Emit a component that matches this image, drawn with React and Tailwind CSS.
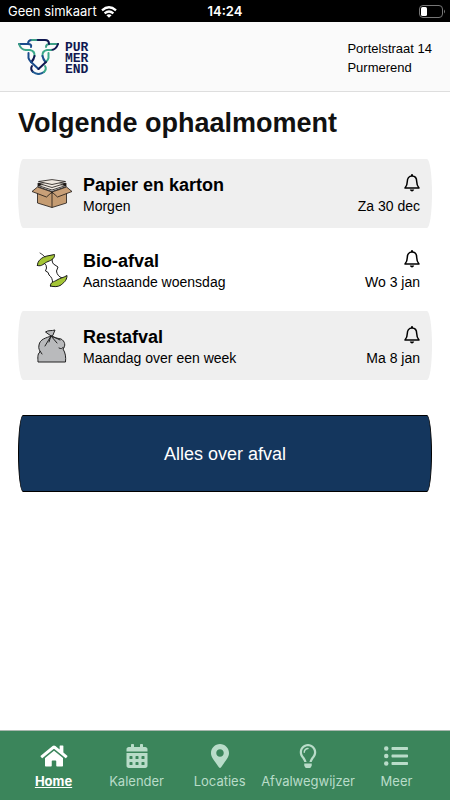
import { FaHome, FaCalendarAlt, FaMapMarkerAlt, FaRegLightbulb, FaListUl } from 'react-icons/fa';

const BoxIcon = () => (
  <svg viewBox="0 0 42 30" className="w-[42px] h-[30px]" stroke="#1c1714" strokeWidth="0.8" strokeLinejoin="round">
    <path d="M6.500 10 L21 14 L35.500 10 V24 L21 28.500 L6.500 24 Z" fill="#c59c72" />
    <path d="M7 6.500 L20 4 L35 6.500 L21 11 Z" fill="#efe8df" />
    <path d="M8 4.500 L20 2.500 L34 4.500 L21 8.500 Z" fill="#efe8df" />
    <path d="M7.500 2.500 L21 0.600 L34.500 2.500 L28 4 L21 5.500 L14 4 Z" fill="#efe8df" />
    <path d="M7 4 L10 5.500 L7 7 Z M35 4 L32 5.500 L35 7 Z" fill="#1c1714" />
    <path d="M6.500 7.500 L21 12.500 L35.500 7.500" fill="none" />
    <path d="M6.500 8 L21 13 L15.500 18 L1 12.500 Z" fill="#c9a078" />
    <path d="M35.500 8 L21 13 L26.500 18 L41 12.500 Z" fill="#c9a078" />
    <path d="M21 13 V28.500" fill="none" />
  </svg>
);

const AppleCoreIcon = () => (
  <svg viewBox="0 0 32 36" className="w-8 h-9" fill="none" stroke="#1a1a1a" strokeWidth="1" strokeLinecap="round" strokeLinejoin="round">
    <path d="M8 11 Q11 13 10.500 16 L9.500 19 Q13 20 13 23 Q17 26 16.500 31" />
    <path d="M16 7 Q16 12 19 13 L22 15 L20.500 19 Q21 24 26 26" />
    <path d="M1.500 13.500 C1 9 6 5 11 4 L18.500 2.500 C19 6 16 8 12 9.500 C8 11 6 15 1.500 13.500 Z" fill="#a4c535" />
    <path d="M14.500 34 C14 30 18 30 21 28 C24 26 27 26 31 23.500 C31 29 27 31 25 33 C22 35 18 35 14.500 34 Z" fill="#a4c535" />
    <path d="M9 5 L7 3 L4 1" strokeWidth="0.800" />
  </svg>
);

const BagIcon = () => (
  <svg viewBox="0 0 30 34" className="w-[30px] h-[34px]" fill="none" stroke="#222" strokeWidth="1" strokeLinecap="round" strokeLinejoin="round">
    <path d="M14 7 C9 9 3 10 2 16 C1 20 3 21 3 23 C0 25 1 30 1 33 H28.500 C29 28 28.500 24 26 20 C29 17 28 12 24 10 C20 9 17 9 14 7 Z" fill="#b9babc" />
    <path d="M14 7 L8.500 3 C11 1 15 2 18 1 L16 6 Z" fill="#b9babc" />
    <path d="M14 7 L8 17 M14 7 L12 13 M14 7 L20 14 M15 7 L23 11" />
    <path d="M3 22 L5 25 M26.500 18 C25 20 24 20 22 19" />
  </svg>
);

const BellIcon = () => (
  <svg viewBox="0 0 16 18" className="w-4 h-[18px]" fill="none" stroke="#000" strokeWidth="1.500" strokeLinejoin="round">
    <path d="M8 2 C4.800 2 3.300 4.500 3.300 7.500 C3.300 11 2.500 12.300 1 14 H15 C13.500 12.300 12.700 11 12.700 7.500 C12.700 4.500 11.200 2 8 2 Z" />
    <path d="M8 0.300 V2" strokeWidth="2" />
    <path d="M5.800 15.600 H10.200 C9.800 18 6.200 18 5.800 15.600 Z" fill="#000" stroke="none" />
  </svg>
);

const WifiIcon = () => (
  <svg viewBox="0 0 16 12" className="w-4 h-3" fill="none" stroke="#fff" strokeWidth="2.300">
    <path d="M1 4.300 Q8 -1.700 15 4.300" />
    <path d="M3.600 7.300 Q8 3.700 12.400 7.300" />
    <path d="M5.400 9.200 Q8 7.200 10.600 9.200 L8 11.800 Z" fill="#fff" stroke="none" />
  </svg>
);

const CowIcon = () => (
  <svg viewBox="0 0 42 36" className="w-[42px] h-9" fill="none" strokeWidth="2" strokeLinecap="round" strokeLinejoin="round">
    {/* ears */}
    <path d="M1 5 H10 Q14 5 13 8" stroke="#194a8b" />
    <path d="M1 5 Q3 11 8 11" stroke="#3d9f86" />
    <path d="M40 5 H32 Q28 5 28 8" stroke="#3d9f86" />
    <path d="M40 5 Q38 11 33 11" stroke="#101850" />
    {/* top of the head */}
    <path d="M10 5 Q10 1 14 1 H20" stroke="#194a8b" />
    <path d="M20 1 H27 Q31 1 31 5" stroke="#101850" />
    <path d="M14 1 H18" stroke="#3d9f86" />
    {/* inner strands */}
    <path d="M8 11 H12 Q17 12 16.500 17" stroke="#3ba98a" />
    <path d="M16.500 17 Q16 20 13.500 23" stroke="#101850" />
    <path d="M33 11 H29 Q24 12 24.500 17" stroke="#3ba98a" />
    <path d="M24.500 17 Q25 20 27.500 23" stroke="#1b4f8d" />
    {/* face */}
    <path d="M10.500 14 V19 Q11 21 13 23" stroke="#194a8b" />
    <path d="M13 23 L20.500 30" stroke="#194a8b" />
    <path d="M30.500 14 V19 Q30 21 28 23" stroke="#3ba98a" />
    <path d="M28 23 L20.500 30" stroke="#101850" />
    {/* nose */}
    <path d="M14 27 Q12 30 15 33" stroke="#101850" />
    <path d="M15 33 Q20.500 37 26 33" stroke="#205b92" />
    <path d="M26 33 Q29 30 27 27" stroke="#3ba98a" />
  </svg>
);

const pickups = [
  { name: 'Papier en karton', when: 'Morgen', date: 'Za 30 dec', Icon: BoxIcon, shaded: true },
  { name: 'Bio-afval', when: 'Aanstaande woensdag', date: 'Wo 3 jan', Icon: AppleCoreIcon },
  { name: 'Restafval', when: 'Maandag over een week', date: 'Ma 8 jan', Icon: BagIcon, shaded: true },
];

const tabs = [
  { label: 'Home', Icon: FaHome, active: true },
  { label: 'Kalender', Icon: FaCalendarAlt },
  { label: 'Locaties', Icon: FaMapMarkerAlt },
  { label: 'Afvalwegwijzer', Icon: FaRegLightbulb },
  { label: 'Meer', Icon: FaListUl },
];

const StatusBar = () => (
  <div className="grid grid-cols-3 items-center h-[22px] px-1 pt-px bg-black text-white text-[13px] font-['Inter',sans-serif]">
    <div className="flex items-center gap-1 pl-1 whitespace-nowrap">
      Geen simkaart
      <WifiIcon />
    </div>
    <div className="text-center font-semibold">14:24</div>
    <svg viewBox="0 0 27 13" className="w-[27px] h-[13px] justify-self-end" fill="none">
      <rect x="0.500" y="0.500" width="23" height="12" rx="3.500" stroke="#777" />
      <rect x="2" y="2" width="6" height="9" rx="1.500" fill="#fff" />
      <path d="M25 4.500 Q27 6.500 25 8.500 Z" fill="#777" />
    </svg>
  </div>
);

const PickupCard = ({ name, when, date, Icon, shaded }) => (
  <li className={`flex items-center h-[69px] px-3 rounded-[5px_/_50%] ${shaded ? 'bg-[#efefef]' : 'bg-white'}`}>
    <div className="w-11 flex justify-center">
      <Icon />
    </div>
    <div className="flex-1 pl-[9px] pt-[2px]">
      <h2 className="text-lg leading-[22px] font-bold">{name}</h2>
      <p className="text-sm leading-5">{when}</p>
    </div>
    <div className="flex flex-col items-end pt-[2px]">
      <button type="button" aria-label={`Herinnering ${name}`} className="flex items-start h-[22px]">
        <BellIcon />
      </button>
      <p className="text-sm leading-5">{date}</p>
    </div>
  </li>
);

const App = () => {
  return (
    <div className="min-h-screen flex flex-col bg-white text-black font-['Liberation_Sans',Arial,sans-serif]">
      <StatusBar />
      <header className="flex items-center justify-between h-[70px] px-[18px] bg-[#fafafa] border-b border-[#dedede]">
        <div className="flex items-end gap-[5px]">
          <CowIcon />
          <p className="text-[13px] leading-[11px] font-bold text-[#101850] font-['Liberation_Mono',monospace]">
            PUR
            <br />
            MER
            <br />
            END
          </p>
        </div>
        <address className="not-italic text-[13px] leading-[19px] pt-[2px]">
          Portelstraat 14
          <br />
          Purmerend
        </address>
      </header>

      <main className="flex-1 px-[18px] pt-[13px]">
        <h1 className="text-[27px] leading-9 font-bold text-[#111]">Volgende ophaalmoment</h1>
        <ul className="mt-[18px] space-y-[7px]">
          {pickups.map((pickup) => (
            <PickupCard key={pickup.name} {...pickup} />
          ))}
        </ul>
        <button
          type="button"
          className="mt-[35px] w-full h-[77px] rounded-[5px_/_50%] border border-black bg-[#14365d] text-white text-lg"
        >
          Alles over afval
        </button>
      </main>

      <nav className="flex h-[70px] px-3 border-t border-[#a9b8af] bg-[#3b855b] font-['Inter',sans-serif]">
        {tabs.map(({ label, Icon, active }) => (
          <a
            key={label}
            href="#"
            className={`flex-1 flex flex-col items-center pt-[13px] text-[13px] leading-5 ${
              active ? 'text-white font-bold underline' : 'text-[#b9dcc9]'
            }`}
          >
            <Icon className="w-7 h-6 mb-[3px]" />
            {label}
          </a>
        ))}
      </nav>
    </div>
  );
};

export default App;
